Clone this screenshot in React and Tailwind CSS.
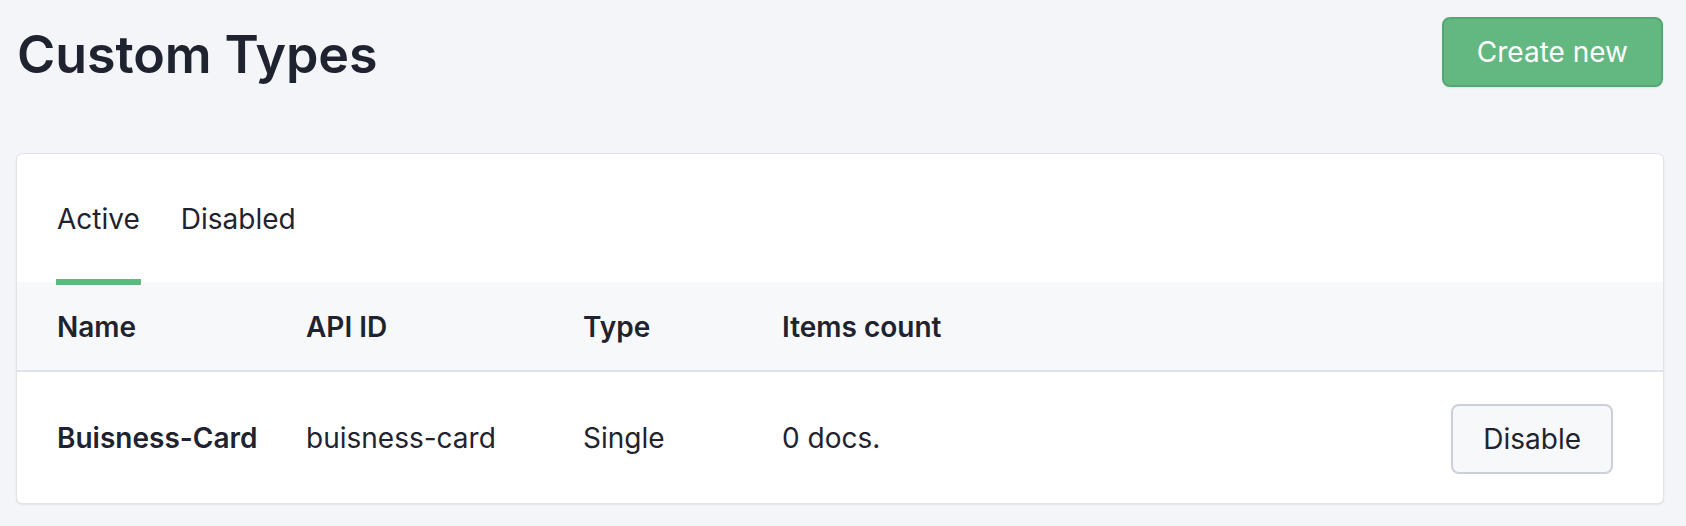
import React from "react";

export default function App() {
  const rows = [
    { name: "Buisness-Card", api: "buisness-card", type: "Single", count: "0 docs." },
  ];
  return (
    <div className="min-h-[526px] w-full bg-[#f4f5f9] px-4 font-['Inter',sans-serif] text-[#1f2330]">
      <div className="flex items-start justify-between pt-[17px]">
        <h1 className="mt-[3px] pl-[1px] text-[52px] font-semibold leading-[70px] tracking-[-0.1px]">
          Custom Types
        </h1>
        <button className="mr-[7px] h-[70px] rounded-[8px] border-2 border-[#56a673] bg-[#63b882] px-[33px] text-[28px] font-normal text-white shadow-[0_1px_2px_rgba(0,0,0,0.08)]">
          Create new
        </button>
      </div>

      <div className="mr-[6px] mt-[63px] overflow-hidden rounded-[6px] border border-[#e1e3e8] bg-white shadow-[0_1px_2px_rgba(0,0,0,0.08)]">
        <div className="flex h-[128px] items-stretch gap-[41px] pl-[40px]">
          <div className="relative flex items-center text-[28px]">
            <span className="mt-[1px]">Active</span>
            <div className="absolute bottom-[-3px] left-[-1px] right-[-1px] z-10 h-[6px] bg-[#5fb97f]" />
          </div>
          <div className="flex items-center text-[28px]">
            <span className="mt-[1px]">Disabled</span>
          </div>
        </div>

        <div className="grid h-[90px] grid-cols-[249px_277px_199px_1fr] items-center border-b-2 border-[#dfe2e7] bg-[#f7f8fa] pl-[40px] pt-[1px] text-[28px] font-semibold">
          <div>Name</div>
          <div>API ID</div>
          <div>Type</div>
          <div>Items count</div>
        </div>

        {rows.map((r) => (
          <div
            key={r.api}
            className="grid h-[131px] grid-cols-[249px_277px_199px_1fr_auto] items-center pl-[40px] pr-[50px] text-[28px]"
          >
            <div className="font-semibold">{r.name}</div>
            <div>{r.api}</div>
            <div>{r.type}</div>
            <div>{r.count}</div>
            <button className="mt-[2px] h-[70px] rounded-[8px] border-2 border-[#cbd0d8] bg-[#f7f8fa] px-[30px] text-[28px] text-[#1f2330]">
              Disable
            </button>
          </div>
        ))}
      </div>
    </div>
  );
}
